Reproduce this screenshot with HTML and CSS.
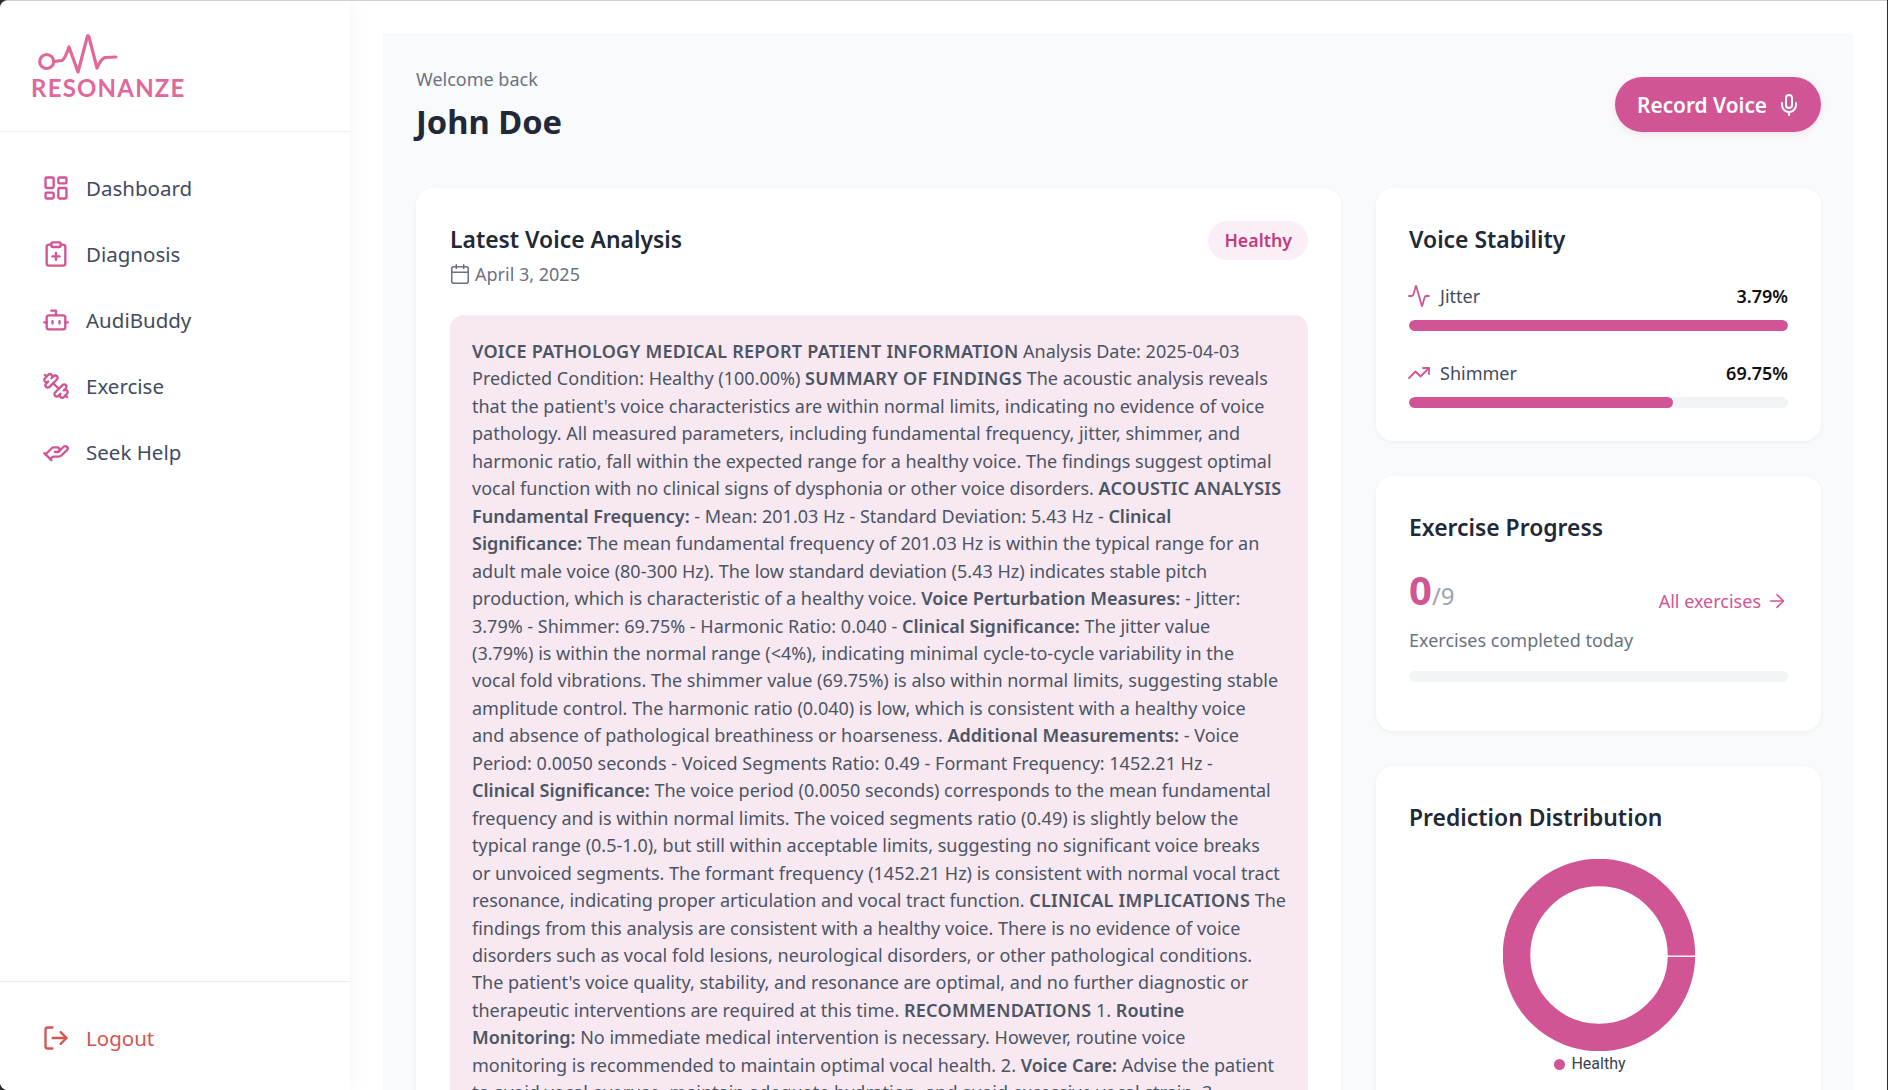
FILE: index.html
```html
<!DOCTYPE html>
<html lang="en">
<head>
  <meta charset="utf-8">
  <title>Resonanze</title>
  <link rel="stylesheet" href="styles.css">
</head>
<body>
<div class="app">

  <aside class="sidebar">
    <div class="brand">
      <svg class="brand-wave" width="90" height="44" viewBox="0 0 90 44" fill="none">
        <circle cx="16.7" cy="31.5" r="7" />
        <path d="M24 31.5 L32 30.5 Q35 29 39 17 L48 42 L57.5 6 Q58 5 59 7 L67 38 Q71 29 75 27.5 L86 27" />
      </svg>
      <div class="brand-name">RESONANZE</div>
    </div>

    <nav class="nav">
      <a class="nav-item">
        <svg class="icon" viewBox="0 0 24 24"><rect x="3" y="3" width="7" height="9" rx="1"/><rect x="14" y="3" width="7" height="5" rx="1"/><rect x="14" y="12" width="7" height="9" rx="1"/><rect x="3" y="16" width="7" height="5" rx="1"/></svg>
        Dashboard
      </a>
      <a class="nav-item">
        <svg class="icon" viewBox="0 0 24 24"><rect x="8" y="2" width="8" height="4" rx="1"/><path d="M16 4h2a2 2 0 0 1 2 2v14a2 2 0 0 1-2 2H6a2 2 0 0 1-2-2V6a2 2 0 0 1 2-2h2"/><path d="M9 14h6"/><path d="M12 17v-6"/></svg>
        Diagnosis
      </a>
      <a class="nav-item">
        <svg class="icon" viewBox="0 0 24 24"><path d="M12 8V4H8"/><rect x="4" y="8" width="16" height="12" rx="2"/><path d="M2 14h2"/><path d="M20 14h2"/><path d="M15 13v2"/><path d="M9 13v2"/></svg>
        AudiBuddy
      </a>
      <a class="nav-item">
        <svg class="icon" viewBox="0 0 24 24"><path d="M14.4 14.4 9.6 9.6"/><path d="M18.657 21.485a2 2 0 1 1-2.829-2.828l-1.767 1.768a2 2 0 1 1-2.829-2.829l6.364-6.364a2 2 0 1 1 2.829 2.829l-1.768 1.767a2 2 0 1 1 2.828 2.829z"/><path d="m21.5 21.5-1.4-1.4"/><path d="M3.9 3.9 2.5 2.5"/><path d="M6.404 12.768a2 2 0 1 1-2.829-2.829l1.768-1.767a2 2 0 1 1-2.828-2.829l2.828-2.828a2 2 0 1 1 2.829 2.828l1.767-1.768a2 2 0 1 1 2.829 2.829z"/></svg>
        Exercise
      </a>
      <a class="nav-item">
        <svg class="icon" viewBox="0 0 24 24"><path d="M11 12h2a2 2 0 1 0 0-4h-3c-.6 0-1.1.2-1.4.6L3 14"/><path d="m7 18 1.6-1.4c.3-.4.8-.6 1.4-.6h4c1.1 0 2.1-.4 2.8-1.2l4.6-4.4a2 2 0 0 0-2.75-2.91l-4.2 3.9"/><path d="m2 13 6 6"/></svg>
        Seek Help
      </a>
    </nav>

    <div class="sidebar-foot">
      <a class="nav-item logout">
        <svg class="icon" viewBox="0 0 24 24"><path d="M9 21H5a2 2 0 0 1-2-2V5a2 2 0 0 1 2-2h4"/><path d="m16 17 5-5-5-5"/><path d="M21 12H9"/></svg>
        Logout
      </a>
    </div>
  </aside>

  <main class="main">
    <header class="page-head">
      <div>
        <div class="welcome">Welcome back</div>
        <h1 class="user-name">John Doe</h1>
      </div>
      <button class="record-btn">
        Record Voice
        <svg class="icon icon-mic" viewBox="0 0 24 24"><path d="M12 2a3 3 0 0 0-3 3v7a3 3 0 0 0 6 0V5a3 3 0 0 0-3-3Z"/><path d="M19 10v2a7 7 0 0 1-14 0v-2"/><path d="M12 19v3"/></svg>
      </button>
    </header>

    <div class="columns">
      <section class="card analysis">
        <div class="analysis-head">
          <div>
            <h2 class="card-title">Latest Voice Analysis</h2>
            <div class="date">
              <svg class="icon icon-cal" viewBox="0 0 24 24"><path d="M8 2v4"/><path d="M16 2v4"/><rect x="3" y="4" width="18" height="18" rx="2"/><path d="M3 10h18"/></svg>
              April 3, 2025
            </div>
          </div>
          <span class="badge">Healthy</span>
        </div>
        <div class="report">
          <strong class="caps">VOICE PATHOLOGY MEDICAL REPORT PATIENT INFORMATION</strong> Analysis Date: 2025-04-03<br>
          Predicted Condition: Healthy (100.00%) <strong class="caps">SUMMARY OF FINDINGS</strong> The acoustic analysis reveals<br>
          that the patient's voice characteristics are within normal limits, indicating no evidence of voice<br>
          pathology. All measured parameters, including fundamental frequency, jitter, shimmer, and<br>
          harmonic ratio, fall within the expected range for a healthy voice. The findings suggest optimal<br>
          vocal function with no clinical signs of dysphonia or other voice disorders. <strong class="caps">ACOUSTIC ANALYSIS</strong><br>
          <strong>Fundamental Frequency:</strong> - Mean: 201.03 Hz - Standard Deviation: 5.43 Hz - <strong>Clinical</strong><br>
          <strong>Significance:</strong> The mean fundamental frequency of 201.03 Hz is within the typical range for an<br>
          adult male voice (80-300 Hz). The low standard deviation (5.43 Hz) indicates stable pitch<br>
          production, which is characteristic of a healthy voice. <strong>Voice Perturbation Measures:</strong> - Jitter:<br>
          3.79% - Shimmer: 69.75% - Harmonic Ratio: 0.040 - <strong>Clinical Significance:</strong> The jitter value<br>
          (3.79%) is within the normal range (&lt;4%), indicating minimal cycle-to-cycle variability in the<br>
          vocal fold vibrations. The shimmer value (69.75%) is also within normal limits, suggesting stable<br>
          amplitude control. The harmonic ratio (0.040) is low, which is consistent with a healthy voice<br>
          and absence of pathological breathiness or hoarseness. <strong>Additional Measurements:</strong> - Voice<br>
          Period: 0.0050 seconds - Voiced Segments Ratio: 0.49 - Formant Frequency: 1452.21 Hz -<br>
          <strong>Clinical Significance:</strong> The voice period (0.0050 seconds) corresponds to the mean fundamental<br>
          frequency and is within normal limits. The voiced segments ratio (0.49) is slightly below the<br>
          typical range (0.5-1.0), but still within acceptable limits, suggesting no significant voice breaks<br>
          or unvoiced segments. The formant frequency (1452.21 Hz) is consistent with normal vocal tract<br>
          resonance, indicating proper articulation and vocal tract function. <strong class="caps">CLINICAL IMPLICATIONS</strong> The<br>
          findings from this analysis are consistent with a healthy voice. There is no evidence of voice<br>
          disorders such as vocal fold lesions, neurological disorders, or other pathological conditions.<br>
          The patient's voice quality, stability, and resonance are optimal, and no further diagnostic or<br>
          therapeutic interventions are required at this time. <strong class="caps">RECOMMENDATIONS</strong> 1. <strong>Routine</strong><br>
          <strong>Monitoring:</strong> No immediate medical intervention is necessary. However, routine voice<br>
          monitoring is recommended to maintain optimal vocal health. 2. <strong>Voice Care:</strong> Advise the patient<br>
          to avoid vocal overuse, maintain adequate hydration, and avoid excessive vocal strain. 3.
        </div>
      </section>

      <div class="side-col">
        <section class="card">
          <h2 class="card-title">Voice Stability</h2>
          <div class="metric">
            <div class="metric-row">
              <span class="metric-name">
                <svg class="icon icon-small" viewBox="0 0 24 24"><path d="M22 12h-2.48a2 2 0 0 0-1.93 1.46l-2.35 8.36a.25.25 0 0 1-.48 0L9.24 2.18a.25.25 0 0 0-.48 0l-2.35 8.36A2 2 0 0 1 4.49 12H2"/></svg>
                Jitter
              </span>
              <span class="metric-value">3.79%</span>
            </div>
            <div class="bar"><div class="bar-fill" style="width: 100%"></div></div>
          </div>
          <div class="metric">
            <div class="metric-row">
              <span class="metric-name">
                <svg class="icon icon-small" viewBox="0 0 24 24"><path d="M22 7 13.5 15.5 8.5 10.5 2 17"/><path d="M16 7h6v6"/></svg>
                Shimmer
              </span>
              <span class="metric-value">69.75%</span>
            </div>
            <div class="bar"><div class="bar-fill" style="width: 69.75%"></div></div>
          </div>
        </section>

        <section class="card progress">
          <h2 class="card-title">Exercise Progress</h2>
          <div class="progress-row">
            <div class="count"><span class="count-done">0</span><span class="count-total">/9</span></div>
            <a class="all-link">
              All exercises
              <svg class="icon icon-arrow" viewBox="0 0 24 24"><path d="M5 12h14"/><path d="m12 5 7 7-7 7"/></svg>
            </a>
          </div>
          <div class="progress-note">Exercises completed today</div>
          <div class="bar"></div>
        </section>

        <section class="card">
          <h2 class="card-title">Prediction Distribution</h2>
          <div class="donut-wrap">
            <svg class="donut" width="192" height="192" viewBox="0 0 192 192">
              <circle cx="96" cy="96" r="82.5" fill="none" stroke="#d15594" stroke-width="27.5" />
              <rect x="164" y="96.5" width="28" height="1.5" fill="#fdf6fa" />
            </svg>
            <div class="legend"><span class="legend-dot"></span>Healthy</div>
          </div>
        </section>
      </div>
    </div>
  </main>

</div>
</body>
</html>
```

FILE: styles.css
```css
html, body {
  height: 100%;
  margin: 0;
  overflow: hidden;
}
body {
  background: #2b2b2b;
  font-family: "Noto Sans", sans-serif;
  color: #1f2937;
}
.app {
  display: flex;
  height: 1090px;
  box-sizing: border-box;
  margin-right: 1px;
  background: #fff;
  border-top: 1px solid #cfcfcf;
  border-radius: 8px 0 0 8px;
  overflow: hidden;
}
.icon {
  width: 28px;
  height: 28px;
  flex: none;
  fill: none;
  stroke: #d15594;
  stroke-width: 2;
  stroke-linecap: round;
  stroke-linejoin: round;
}

/* sidebar */
.sidebar {
  width: 350px;
  flex: none;
  display: flex;
  flex-direction: column;
  background: #fff;
  box-shadow: 0 0 18px rgba(0, 0, 0, 0.05);
}
.brand {
  height: 131px;
  box-sizing: border-box;
  padding: 29px 0 0 31px;
  border-bottom: 1px solid #fce7f3;
}
.brand-wave {
  display: block;
  margin-left: -1px;
  fill: none;
  stroke: #e0699a;
  stroke-width: 3.2;
  stroke-linecap: round;
  stroke-linejoin: round;
}
.brand-name {
  margin-top: 2px;
  font-family: "Lato", sans-serif;
  font-size: 24px;
  line-height: 24px;
  font-weight: 700;
  letter-spacing: 1.2px;
  color: #e0699a;
}
.nav {
  flex: 1;
  padding: 23px 0 0 42px;
}
.nav-item {
  display: flex;
  align-items: center;
  gap: 16px;
  height: 66px;
  font-size: 20.5px;
  color: #414b5e;
}
.sidebar-foot {
  padding: 23px 0 19px 42px;
  border-top: 1px solid #f8e8ee;
}
.logout {
  color: #d45454;
}
.logout .icon {
  stroke: #d45454;
}

/* main panel */
.main {
  flex: 1;
  margin: 32px 33px 0 33px;
  padding: 0 33px;
  background: #f9fafb;
  overflow: hidden;
}
.page-head {
  display: flex;
  justify-content: space-between;
  align-items: center;
  height: 155px;
  box-sizing: border-box;
  padding-bottom: 12px;
}
.welcome {
  font-size: 18px;
  line-height: 24px;
  color: #6b7280;
}
.user-name {
  margin: 11px 0 0;
  font-size: 32.7px;
  line-height: 40px;
  font-weight: 700;
  color: #1f2937;
}
.record-btn {
  display: flex;
  align-items: center;
  gap: 10px;
  height: 55px;
  padding: 0 20px 0 22px;
  border: none;
  border-radius: 28px;
  background: #d15594;
  color: #fff;
  font-family: inherit;
  font-size: 20.8px;
  font-weight: 600;
  box-shadow: 0 2px 6px rgba(209, 85, 148, 0.15);
}
.icon-mic {
  width: 24px;
  height: 24px;
  stroke: #fff;
}

.columns {
  display: grid;
  grid-template-columns: 1fr 445px;
  gap: 35px;
  align-items: start;
}
.side-col {
  display: flex;
  flex-direction: column;
  gap: 35px;
}
.card {
  padding: 33px;
  background: #fff;
  border-radius: 17px;
  box-shadow: 0 1px 5px rgba(0, 0, 0, 0.05);
}
.card-title {
  margin: 0;
  font-size: 22.9px;
  line-height: 38px;
  font-weight: 600;
  color: #1f2937;
}

/* analysis card */
.analysis {
  padding-left: 34px;
}
.analysis-head {
  display: flex;
  justify-content: space-between;
  align-items: flex-start;
}
.date {
  display: flex;
  align-items: center;
  gap: 4px;
  margin-top: 2px;
  margin-left: -1px;
  font-size: 18px;
  line-height: 26px;
  color: #6b7280;
}
.icon-cal {
  width: 22px;
  height: 22px;
  stroke: #6b7280;
  stroke-width: 1.7;
}
.badge {
  padding: 0 16px;
  line-height: 39px;
  border-radius: 20px;
  background: #fbeff7;
  color: #c43a7d;
  font-size: 17.8px;
  font-weight: 600;
}
.report {
  margin-top: 28px;
  padding: 23px 22px 22px;
  background: #f8e8f1;
  border-radius: 14px;
  font-size: 18px;
  line-height: 27.45px;
  color: #4b5563;
  white-space: nowrap;
}
.report strong {
  font-weight: 600;
}
.report .caps {
  letter-spacing: 0.25px;
}

/* stability card */
.metric-row {
  display: flex;
  justify-content: space-between;
  align-items: center;
  margin-top: 24px;
}
.metric + .metric {
  margin-top: 29px;
}
.metric + .metric .metric-row {
  margin-top: 12px;
}
.metric-name {
  display: flex;
  align-items: center;
  gap: 9px;
  font-size: 18px;
  line-height: 26px;
  color: #414b5e;
}
.icon-small {
  width: 24px;
  height: 24px;
  margin-left: -2px;
  stroke-width: 1.8;
}
.metric-value {
  font-size: 18px;
  font-weight: 600;
  color: #111;
}
.bar {
  height: 11px;
  margin-top: 11px;
  background: #f3f4f6;
  border-radius: 6px;
  overflow: hidden;
}
.bar-fill {
  height: 100%;
  background: #d15594;
  border-radius: 6px;
}

/* progress card */
.progress-row {
  display: flex;
  justify-content: space-between;
  align-items: flex-end;
  margin-top: 18px;
}
.count {
  line-height: 50px;
}
.count-done {
  font-size: 40px;
  font-weight: 700;
  color: #d15594;
}
.count-total {
  font-size: 24px;
  color: #9ca3af;
}
.all-link {
  display: flex;
  align-items: center;
  gap: 5px;
  padding-bottom: 8px;
  font-size: 18px;
  line-height: 30px;
  color: #d15594;
}
.icon-arrow {
  width: 22px;
  height: 22px;
  stroke-width: 1.7;
}
.progress-note {
  margin-top: 3px;
  font-size: 18px;
  line-height: 26px;
  color: #6b7280;
}
.progress .bar {
  margin-top: 18px;
  margin-bottom: 16px;
}

/* donut card */
.donut-wrap {
  display: flex;
  flex-direction: column;
  align-items: center;
  margin-top: 22px;
}
.donut {
  display: block;
}
.legend {
  display: flex;
  align-items: center;
  gap: 6px;
  margin-top: 2px;
  margin-right: 17px;
  font-family: "Roboto", sans-serif;
  font-size: 16px;
  line-height: 22px;
  color: #374151;
}
.legend-dot {
  width: 11px;
  height: 11px;
  border-radius: 50%;
  background: #d15594;
}
```
